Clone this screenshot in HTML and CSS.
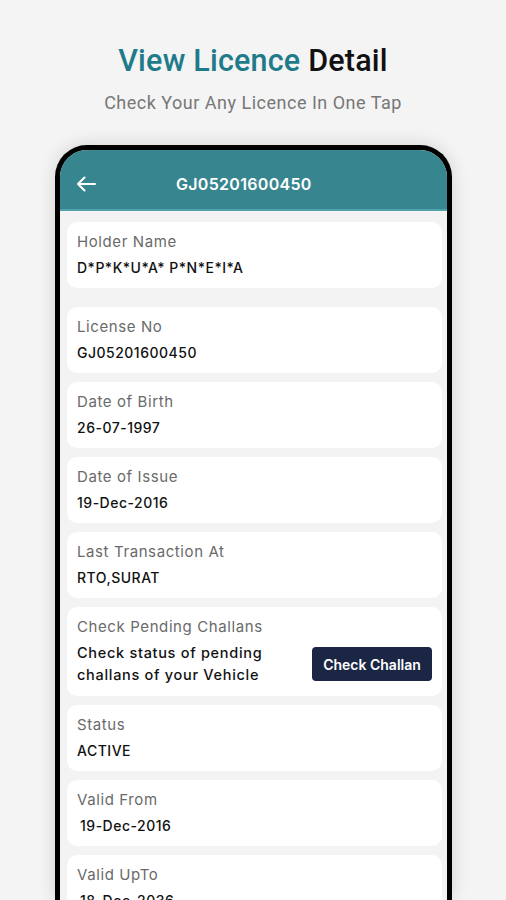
FILE: index.html
```html
<!DOCTYPE html>
<html>
<head>
<meta charset="utf-8">
<link rel="stylesheet" href="styles.css">
</head>
<body>
<div class="page">
  <h1 class="title"><span class="accent">View Licence</span> Detail</h1>
  <p class="subtitle">Check Your Any Licence In One Tap</p>
  <div class="phone">
    <div class="appbar">
      <svg class="back" width="20" height="16" viewBox="0 0 20 16"><path d="M19 8H2M8.5 1.5L2 8l6.5 6.5" fill="none" stroke="#fff" stroke-width="2" stroke-linecap="round" stroke-linejoin="round"/></svg>
      <span class="appbar-title">GJ05201600450</span>
    </div>
    <div class="content">
      <div class="card first">
        <div class="label">Holder Name</div>
        <div class="value">D*P*K*U*A* P*N*E*I*A</div>
      </div>
      <div class="card">
        <div class="label">License No</div>
        <div class="value">GJ05201600450</div>
      </div>
      <div class="card">
        <div class="label">Date of Birth</div>
        <div class="value">26-07-1997</div>
      </div>
      <div class="card">
        <div class="label">Date of Issue</div>
        <div class="value">19-Dec-2016</div>
      </div>
      <div class="card">
        <div class="label">Last Transaction At</div>
        <div class="value">RTO,SURAT</div>
      </div>
      <div class="card">
        <div class="label">Check Pending Challans</div>
        <div class="challan-row">
          <div class="desc">Check status of pending<br>challans of your Vehicle</div>
          <button class="btn">Check Challan</button>
        </div>
      </div>
      <div class="card">
        <div class="label">Status</div>
        <div class="value">ACTIVE</div>
      </div>
      <div class="card">
        <div class="label">Valid From</div>
        <div class="value indent">19-Dec-2016</div>
      </div>
      <div class="card">
        <div class="label">Valid UpTo</div>
        <div class="value indent">18-Dec-2036</div>
      </div>
    </div>
  </div>
</div>
</body>
</html>
```
FILE: styles.css
```css
* { box-sizing: border-box; }
html, body {
  margin: 0;
  padding: 0;
  background: #f4f4f4;
}
.page {
  width: 506px;
  height: 900px;
  overflow: hidden;
  display: flex;
  flex-direction: column;
  align-items: center;
}
.title {
  margin: 44px 0 0;
  font-family: Roboto, "Liberation Sans", sans-serif;
  font-weight: 500;
  font-size: 30.5px;
  line-height: 34px;
  color: #111;
  letter-spacing: 0.2px;
}
.accent { color: #1f7b8a; }
.subtitle {
  margin: 15px 0 0;
  font-family: Roboto, "Liberation Sans", sans-serif;
  font-size: 18px;
  line-height: 20px;
  color: #777;
  letter-spacing: 0.5px;
}
.phone {
  margin-top: 32px;
  margin-left: 1px;
  width: 397px;
  flex: 1;
  border: 5px solid #000;
  border-bottom: none;
  border-radius: 32px 32px 0 0;
  background: #f3f3f3;
  overflow: hidden;
  box-shadow: 0 0 18px rgba(0,0,0,0.14);
}
.appbar {
  height: 61px;
  background: #37868f;
  border-bottom: 2px solid #4fa2ae;
  display: flex;
  align-items: center;
  padding: 8px 0 0 16px;
}
.back { flex: none; }
.appbar-title {
  margin-left: 80px;
  font-family: Inter, "DejaVu Sans", sans-serif;
  font-weight: 600;
  font-size: 16px;
  color: #fff;
  letter-spacing: 0.3px;
}
.content {
  padding: 11px 5px 0 7px;
  display: flex;
  flex-direction: column;
  gap: 9px;
}
.card.first { margin-bottom: 10px; }
.card {
  background: #fff;
  border-radius: 10px;
  padding: 10px 10px 10px;
  font-family: Inter, "DejaVu Sans", sans-serif;
}
.label {
  font-size: 15px;
  line-height: 20px;
  color: #6a6a6a;
  letter-spacing: 0.6px;
}
.value {
  margin-top: 6px;
  font-size: 14px;
  line-height: 20px;
  color: #111;
  font-weight: 500;
  letter-spacing: 0.5px;
}
.value.indent { padding-left: 3px; }
.challan-row {
  margin-top: 5px;
  display: flex;
  align-items: center;
  justify-content: space-between;
}
.desc {
  font-size: 14.5px;
  line-height: 22px;
  color: #111;
  font-weight: 500;
  letter-spacing: 0.7px;
}
.btn {
  font-family: Inter, "DejaVu Sans", sans-serif;
  font-weight: 600;
  font-size: 14px;
  color: #fff;
  background: #1b2644;
  border: none;
  border-radius: 4px;
  width: 120px;
  height: 34px;
  padding: 0;
}
```
